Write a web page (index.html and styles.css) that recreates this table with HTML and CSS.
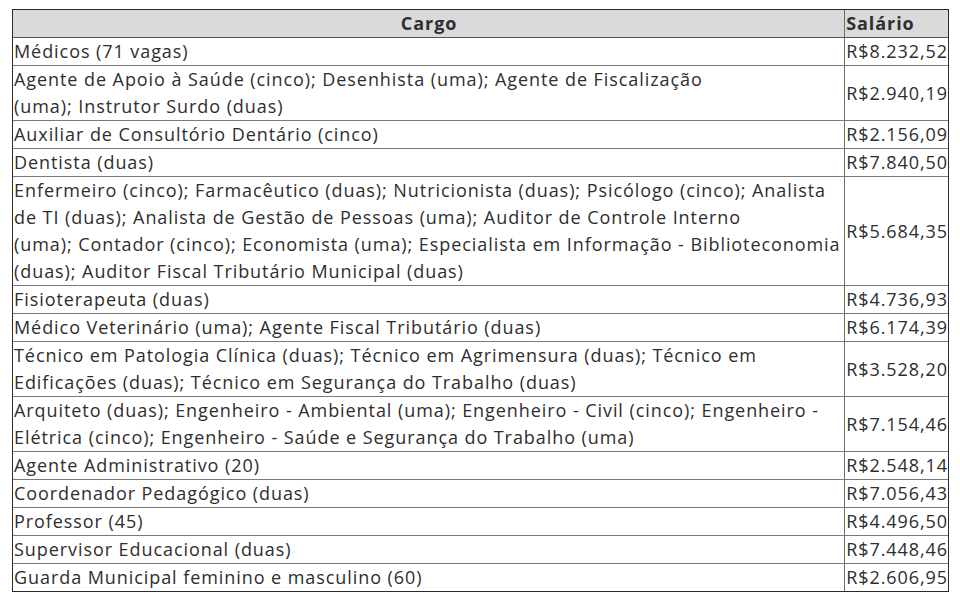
FILE: index.html
```html
<!DOCTYPE html>
<html lang="pt-BR">
<head>
<meta charset="utf-8">
<title>Cargos e salários</title>
<link rel="stylesheet" href="styles.css">
</head>
<body>
<table class="tabela">
  <thead>
    <tr><th class="cargo-h">Cargo</th><th class="sal-h">Salário</th></tr>
  </thead>
  <tbody>
    <tr><td>Médicos (71 vagas)</td><td class="sal">R$8.232,52</td></tr>
    <tr><td>Agente de Apoio à Saúde (cinco); Desenhista (uma); Agente de Fiscalização<br>(uma); Instrutor Surdo (duas)</td><td class="sal">R$2.940,19</td></tr>
    <tr><td>Auxiliar de Consultório Dentário (cinco)</td><td class="sal">R$2.156,09</td></tr>
    <tr><td>Dentista (duas)</td><td class="sal">R$7.840,50</td></tr>
    <tr><td>Enfermeiro (cinco); Farmacêutico (duas); Nutricionista (duas); Psicólogo (cinco); Analista<br>de TI (duas); Analista de Gestão de Pessoas (uma); Auditor de Controle Interno<br>(uma); Contador (cinco); Economista (uma); Especialista em Informação - Biblioteconomia<br>(duas); Auditor Fiscal Tributário Municipal (duas)</td><td class="sal">R$5.684,35</td></tr>
    <tr><td>Fisioterapeuta (duas)</td><td class="sal">R$4.736,93</td></tr>
    <tr><td>Médico Veterinário (uma); Agente Fiscal Tributário (duas)</td><td class="sal">R$6.174,39</td></tr>
    <tr><td>Técnico em Patologia Clínica (duas); Técnico em Agrimensura (duas); Técnico em<br>Edificações (duas); Técnico em Segurança do Trabalho (duas)</td><td class="sal">R$3.528,20</td></tr>
    <tr><td>Arquiteto (duas); Engenheiro - Ambiental (uma); Engenheiro - Civil (cinco); Engenheiro -<br>Elétrica (cinco); Engenheiro - Saúde e Segurança do Trabalho (uma)</td><td class="sal">R$7.154,46</td></tr>
    <tr><td>Agente Administrativo (20)</td><td class="sal">R$2.548,14</td></tr>
    <tr><td>Coordenador Pedagógico (duas)</td><td class="sal">R$7.056,43</td></tr>
    <tr><td>Professor (45)</td><td class="sal">R$4.496,50</td></tr>
    <tr><td>Supervisor Educacional (duas)</td><td class="sal">R$7.448,46</td></tr>
    <tr><td>Guarda Municipal feminino e masculino (60)</td><td class="sal">R$2.606,95</td></tr>
  </tbody>
</table>
</body>
</html>
```

FILE: styles.css
```css
html, body {
  margin: 0;
  padding: 0;
  background: #fff;
}

body {
  padding: 9px 0 0 12px;
  font-family: "Open Sans", "Noto Sans", sans-serif;
  font-size: 18px;
  line-height: 27px;
  letter-spacing: 0.93px;
  color: #2e2e2e;
}

.tabela {
  width: 937px;
  border-collapse: separate;
  border-spacing: 0;
  border: 1px solid #2b2b2b;
}

.tabela th,
.tabela td {
  padding: 0 0 0 1px;
  vertical-align: middle;
  text-align: left;
  font-weight: normal;
  white-space: nowrap;
}

.tabela th {
  background: #dadada;
  font-weight: 700;
  border-bottom: 1px solid #555;
}

.tabela th.cargo-h {
  text-align: center;
}

.tabela th + th,
.tabela td + td {
  border-left: 1px solid #6f6f6f;
}

.tabela tbody tr + tr td {
  border-top: 1px solid #7a7a7a;
}

.tabela .sal,
.tabela .sal-h {
  width: 1%;
}
```
